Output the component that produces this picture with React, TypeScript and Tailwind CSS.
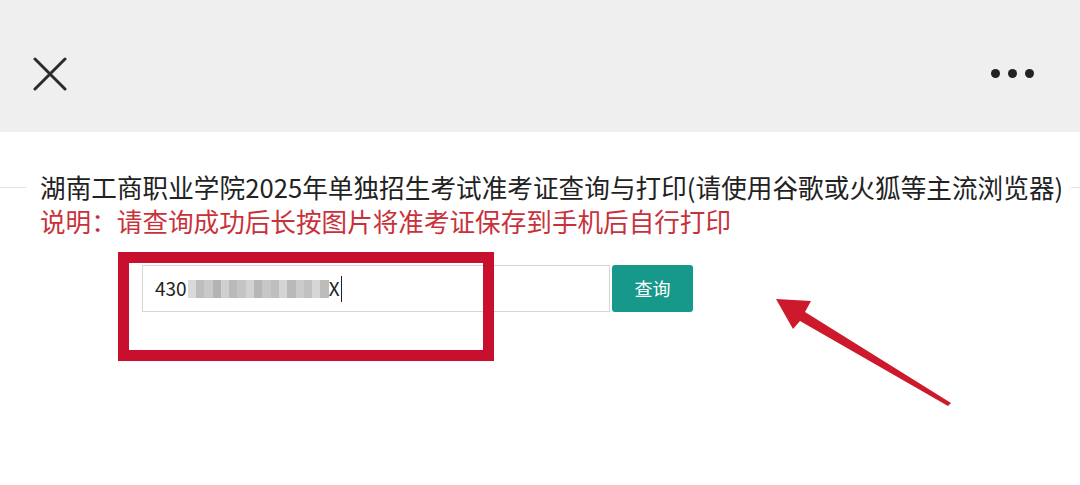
import React from "react";

const blurCells = [
  "#d9d9d9", "#bdbdbd", "#c9c9c9", "#b3b3b3", "#cfcfcf", "#bababa", "#c4c4c4", "#d2d2d2",
  "#b7b7b7", "#c7c7c7", "#bfbfbf", "#d4d4d4", "#b9b9b9", "#cbcbcb", "#c1c1c1", "#d6d6d6",
  "#bcbcbc",
];

const App: React.FC = () => {
  return (
    <div
      className="relative w-[1080px] h-[485px] bg-white overflow-hidden"
      style={{ fontFamily: '"Noto Sans CJK SC", "Noto Sans", sans-serif' }}
    >
      {/* top bar */}
      <div className="h-[132px] bg-[#efefef] flex items-center justify-between pl-[33px] pr-[46px]">
        <svg width="34" height="34" viewBox="0 0 34 34" className="mt-[15px]">
          <path d="M2 2 L32 32 M32 2 L2 32" stroke="#2b2b2b" strokeWidth="3" strokeLinecap="round" />
        </svg>
        <div className="flex gap-[8px] mt-[15px]">
          <span className="w-[9px] h-[9px] rounded-full bg-[#222]" />
          <span className="w-[9px] h-[9px] rounded-full bg-[#222]" />
          <span className="w-[9px] h-[9px] rounded-full bg-[#222]" />
        </div>
      </div>

      {/* content */}
      <div className="pt-[37px]">
        <div className="flex items-center">
          <div className="w-[26px] h-px bg-[#e3e3e3]" />
          <span className="ml-[14px] text-[25.6px] leading-[36px] text-[#222] whitespace-nowrap tracking-[0.05px]">
            湖南工商职业学院2025年单独招生考试准考证查询与打印(请使用谷歌或火狐等主流浏览器)
          </span>
          <div className="flex-1 ml-[8px] h-px bg-[#e3e3e3]" />
        </div>
        <div className="pl-[40px] text-[25.6px] leading-[32px] text-[#c9313a] whitespace-nowrap">
          说明：请查询成功后长按图片将准考证保存到手机后自行打印
        </div>

        <div className="flex pl-[142px] mt-[28px] gap-[2px]">
          <div className="w-[468px] h-[47px] border border-[#d6d6d6] flex items-center pl-[12px] text-[19px] text-[#222]">
            <span>430</span>
            <span className="flex h-[18px] ml-[1px]">
              {blurCells.map((c, i) => (
                <span key={i} className="w-[8.3px] h-full" style={{ background: c }} />
              ))}
            </span>
            <span>X</span>
            <span className="w-px h-[26px] bg-[#222] ml-[1px]" />
          </div>
          <button className="w-[81px] h-[47px] rounded-[3px] bg-[#16998a] text-white text-[18px]">
            查询
          </button>
        </div>
      </div>

      {/* red annotation box */}
      <div className="absolute left-[118px] top-[252px] w-[376px] h-[109px] border-[11px] border-[#c8102e]" />

      {/* red annotation arrow */}
      <svg className="absolute left-0 top-0" width="1080" height="485" viewBox="0 0 1080 485">
        <polygon
          points="776,299 811,301 805,312 951,403 948,406 800,321 793,329"
          fill="#cc1a2c"
        />
      </svg>
    </div>
  );
};

export default App;
